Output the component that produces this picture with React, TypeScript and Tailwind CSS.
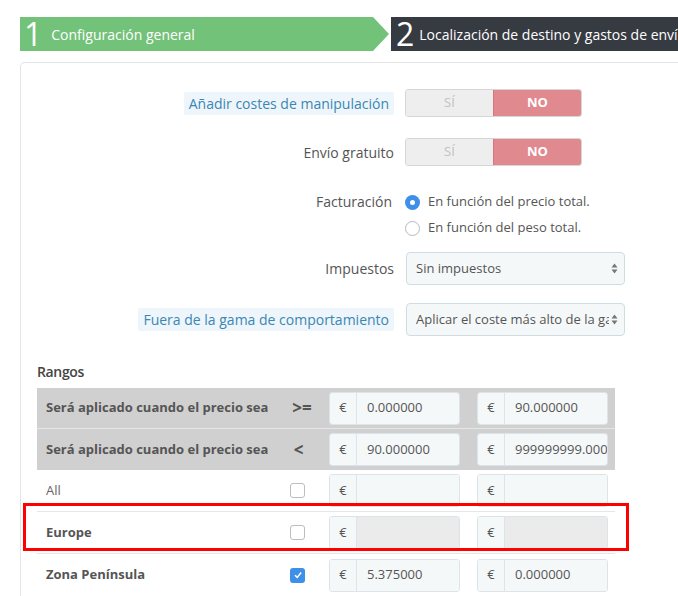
import React from "react";

const font = { fontFamily: '"Open Sans", "Liberation Sans", sans-serif' };

function Toggle() {
  return (
    <div className="flex h-[28px] w-[177px] rounded-[3px] border border-[#d6d6d6] overflow-hidden text-[13px]">
      <div className="flex-1 flex items-center justify-center bg-[#eeeeee] text-[#c2c2c2]">SÍ</div>
      <div className="flex-1 flex items-center justify-center bg-[#e0898f] text-white font-bold border-l border-[#d7777d]">
        NO
      </div>
    </div>
  );
}

function SelectBox({ value }: { value: string }) {
  return (
    <div className="flex items-center h-[33px] w-[219px] rounded-[4px] border border-[#cfdde3] bg-[#f5f8f9] pl-[9px] pr-[6px] text-[13px] text-[#555]">
      <span className="flex-1 whitespace-nowrap overflow-hidden">{value}</span>
      <svg width="7" height="11" viewBox="0 0 7 11" className="ml-[2px]">
        <path d="M3.5 0.5 L6.5 4.5 L0.5 4.5 Z" fill="#777" />
        <path d="M3.5 10.5 L6.5 6.5 L0.5 6.5 Z" fill="#777" />
      </svg>
    </div>
  );
}

function Radio({ checked, label }: { checked?: boolean; label: string }) {
  return (
    <div className="flex items-center h-[26px]">
      {checked ? (
        <span className="w-[15px] h-[15px] rounded-full bg-[#3d8fe8] flex items-center justify-center">
          <span className="w-[5px] h-[5px] rounded-full bg-white" />
        </span>
      ) : (
        <span className="w-[15px] h-[15px] rounded-full border border-[#b9b9b9] bg-white" />
      )}
      <span className="ml-[8px] text-[13px] text-[#555]">{label}</span>
    </div>
  );
}

function Money({ value, disabled, w }: { value?: string; disabled?: boolean; w: number }) {
  return (
    <div className="flex h-[33px] rounded-[3px] border border-[#dbe4e8] overflow-hidden" style={{ width: w }}>
      <div className="w-[27px] flex items-center justify-center bg-[#f5f8f9] border-r border-[#dbe4e8] text-[13px] text-[#555]">
        €
      </div>
      <div
        className={
          "flex-1 flex items-center pl-[10px] pr-[6px] text-[13px] text-[#555] whitespace-nowrap overflow-hidden " +
          (disabled ? "bg-[#ebebeb]" : "bg-[#f5f8f9]")
        }
      >
        {value}
      </div>
    </div>
  );
}

function Check({ checked }: { checked?: boolean }) {
  return checked ? (
    <span className="w-[15px] h-[15px] rounded-[3px] bg-[#3d8fe8] flex items-center justify-center">
      <svg width="10" height="10" viewBox="0 0 10 10">
        <path d="M2 5.2 L4.2 7.4 L8.2 2.6" stroke="white" strokeWidth="1.6" fill="none" />
      </svg>
    </span>
  ) : (
    <span className="w-[15px] h-[15px] rounded-[3px] border border-[#bdbdbd] bg-white" />
  );
}

export default function App() {
  return (
    <div className="relative w-[678px] h-[596px] overflow-hidden bg-white" style={font}>
      {/* Pasos */}
      <div className="flex pt-[17px] pl-[20px] h-[51px]">
        <div className="w-[353px] h-[34px] bg-[#72c279] flex items-center text-white">
          <span className="pl-[4px] text-[32px] leading-none">1</span>
          <span className="ml-[9px] text-[14px]">Configuración general</span>
        </div>
        <svg width="16" height="34" viewBox="0 0 16 34">
          <path d="M0 0 L16 17 L0 34 Z" fill="#72c279" />
        </svg>
        <div className="ml-[2px] flex-1 h-[34px] bg-[#363a41] flex items-center text-white whitespace-nowrap overflow-hidden">
          <span className="pl-[5px] text-[32px] leading-none">2</span>
          <span className="ml-[5px] text-[14px]">Localización de destino y gastos de envío</span>
        </div>
      </div>

      {/* Panel */}
      <div className="mt-[11px] ml-[20px] border-l border-t border-[#e4e4e4] rounded-tl-[5px] pt-[26px] h-[600px]">
        <div className="flex items-center">
          <div className="w-[373px] flex justify-end">
            <span className="bg-[#eef6fb] text-[#3a86b4] text-[14px] px-[5px] py-[1px] rounded-[2px]">
              Añadir costes de manipulación
            </span>
          </div>
          <div className="ml-[11px]">
            <Toggle />
          </div>
        </div>

        <div className="flex items-center mt-[21px]">
          <div className="w-[373px] text-right text-[14px] text-[#555]">Envío gratuito</div>
          <div className="ml-[11px]">
            <Toggle />
          </div>
        </div>

        <div className="flex mt-[23px]">
          <div className="w-[373px] text-right text-[14px] text-[#555] leading-[26px] pr-[2px]">Facturación</div>
          <div className="ml-[11px]">
            <Radio checked label="En función del precio total." />
            <Radio label="En función del peso total." />
          </div>
        </div>

        <div className="flex items-center mt-[11px]">
          <div className="w-[373px] text-right text-[14px] text-[#555]">Impuestos</div>
          <div className="ml-[12px]">
            <SelectBox value="Sin impuestos" />
          </div>
        </div>

        <div className="flex items-center mt-[18px]">
          <div className="w-[373px] flex justify-end">
            <span className="bg-[#eef6fb] text-[#3a86b4] text-[14px] px-[5px] py-[1px] rounded-[2px]">
              Fuera de la gama de comportamiento
            </span>
          </div>
          <div className="ml-[12px]">
            <SelectBox value="Aplicar el coste más alto de la gama definida" />
          </div>
        </div>

        {/* Rangos */}
        <div className="mt-[27px] ml-[16px] text-[14px] font-semibold text-[#444] tracking-tight h-[18px] leading-[18px]">
          Rangos
        </div>

        <div className="mt-[7px] ml-[16px] w-[578px]">
          <div className="flex items-center h-[41px] bg-[#d0d0d0] border-b border-[#e6e6e6]">
            <div className="w-[243px] pl-[9px] text-[13px] font-bold text-[#555] whitespace-nowrap">
              Será aplicado cuando el precio sea
            </div>
            <div className="w-[49px] text-center text-[17px] font-bold text-[#555] pr-[5px]">&gt;=</div>
            <Money value="0.000000" w={131} />
            <div className="ml-[17px]">
              <Money value="90.000000" w={131} />
            </div>
          </div>
          <div className="flex items-center h-[41px] bg-[#d0d0d0]">
            <div className="w-[243px] pl-[9px] text-[13px] font-bold text-[#555] whitespace-nowrap">
              Será aplicado cuando el precio sea
            </div>
            <div className="w-[49px] text-center text-[17px] font-bold text-[#555] pr-[12px]">&lt;</div>
            <Money value="90.000000" w={131} />
            <div className="ml-[17px]">
              <Money value="999999999.000000" w={131} />
            </div>
          </div>

          <div className="flex items-center h-[42px] border-b border-[#e6e6e6]">
            <div className="w-[243px] pl-[9px] text-[13px] text-[#666]">All</div>
            <div className="w-[49px] pl-[10px] flex">
              <Check />
            </div>
            <Money w={131} />
            <div className="ml-[17px]">
              <Money w={131} />
            </div>
          </div>

          <div className="flex items-center h-[42px] border-b border-[#e6e6e6]">
            <div className="w-[243px] pl-[9px] text-[13px] font-bold text-[#555]">Europe</div>
            <div className="w-[49px] pl-[10px] flex">
              <Check />
            </div>
            <Money w={131} disabled />
            <div className="ml-[17px]">
              <Money w={131} disabled />
            </div>
          </div>

          <div className="flex items-center h-[42px]">
            <div className="w-[243px] pl-[9px] text-[13px] font-bold text-[#555]">Zona Península</div>
            <div className="w-[49px] pl-[10px] flex">
              <Check checked />
            </div>
            <Money value="5.375000" w={131} />
            <div className="ml-[17px]">
              <Money value="0.000000" w={131} />
            </div>
          </div>
        </div>
      </div>

      {/* Marca roja */}
      <div className="absolute left-[23px] top-[503px] w-[606px] h-[48px] border-[3px] border-[#ff0000]" />
    </div>
  );
}
